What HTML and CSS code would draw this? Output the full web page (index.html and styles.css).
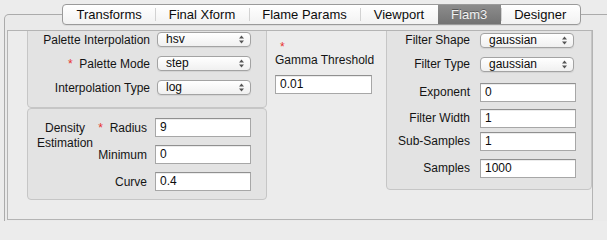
FILE: index.html
```html
<!DOCTYPE html>
<html>
<head>
<meta charset="utf-8">
<link rel="stylesheet" href="styles.css">
</head>
<body>
<div class="page">
  <div class="tabs">
    <div class="tab">Transforms</div>
    <div class="tab">Final Xform</div>
    <div class="tab">Flame Params</div>
    <div class="tab">Viewport</div>
    <div class="tab active">Flam3</div>
    <div class="tab">Designer</div>
  </div>
  <div class="frame">
    <div class="scroll">
      <div class="content">
        <div class="col-left">
          <div class="box palette">
            <div class="lbl">Palette Interpolation</div>
            <div class="combo"><span>hsv</span><svg class="arrows" width="5" height="9" viewBox="0 0 5 9"><path d="M0 3.5L2.5 0.5L5 3.5Z M0 5.5L2.5 8.5L5 5.5Z"/></svg></div>
            <div class="lbl"><span class="req">*</span>&nbsp; Palette Mode</div>
            <div class="combo"><span>step</span><svg class="arrows" width="5" height="9" viewBox="0 0 5 9"><path d="M0 3.5L2.5 0.5L5 3.5Z M0 5.5L2.5 8.5L5 5.5Z"/></svg></div>
            <div class="lbl">Interpolation Type</div>
            <div class="combo"><span>log</span><svg class="arrows" width="5" height="9" viewBox="0 0 5 9"><path d="M0 3.5L2.5 0.5L5 3.5Z M0 5.5L2.5 8.5L5 5.5Z"/></svg></div>
          </div>
          <div class="box density">
            <div class="group-title">Density<br>Estimation</div>
            <div class="lbl"><span class="req">*</span>&nbsp; Radius</div>
            <div class="field">9</div>
            <div class="lbl">Minimum</div>
            <div class="field">0</div>
            <div class="lbl">Curve</div>
            <div class="field">0.4</div>
          </div>
        </div>
        <div class="col-mid">
          <div class="req star">*</div>
          <div class="mid-lbl">Gamma Threshold</div>
          <div class="field mid-field">0.01</div>
        </div>
        <div class="box filter">
          <div class="lbl sm">Filter Shape</div>
          <div class="combo"><span>gaussian</span><svg class="arrows" width="5" height="9" viewBox="0 0 5 9"><path d="M0 3.5L2.5 0.5L5 3.5Z M0 5.5L2.5 8.5L5 5.5Z"/></svg></div>
          <div class="lbl sm">Filter Type</div>
          <div class="combo"><span>gaussian</span><svg class="arrows" width="5" height="9" viewBox="0 0 5 9"><path d="M0 3.5L2.5 0.5L5 3.5Z M0 5.5L2.5 8.5L5 5.5Z"/></svg></div>
          <div class="lbl">Exponent</div>
          <div class="field">0</div>
          <div class="lbl">Filter Width</div>
          <div class="field">1</div>
          <div class="lbl">Sub-Samples</div>
          <div class="field">1</div>
          <div class="lbl">Samples</div>
          <div class="field">1000</div>
        </div>
      </div>
    </div>
  </div>
</div>
</body>
</html>
```

FILE: styles.css
```css
* { box-sizing: border-box; }
html, body { margin: 0; padding: 0; overflow: hidden; }
body {
  background: #ececec;
  font-family: "Liberation Sans", Arial, sans-serif;
  font-size: 12px;
  color: #141414;
}
.page {
  width: 607px;
  height: 221px;
  overflow: hidden;
  display: flex;
  flex-direction: column;
  align-items: flex-start;
  padding-top: 4px;
}
.tabs {
  flex: none;
  display: flex;
  margin-left: 62px;
  height: 21px;
  border: 1px solid #9a9a9a;
  border-radius: 4px;
  background: linear-gradient(#ffffff, #f2f2f2);
  position: relative;
  z-index: 1;
  overflow: hidden;
  box-shadow: 0 1px 0 rgba(0,0,0,0.06);
}
.tab {
  padding: 0 13.5px;
  line-height: 19px;
  font-size: 13px;
  color: #0c0c0c;
}
.tab + .tab {
  background: linear-gradient(#d2d2d2, #d2d2d2) left center / 1px 13px no-repeat;
}
.tab.active, .tab + .tab.active {
  background: linear-gradient(#8c8c8c, #737373);
  color: #f2f2f2;
  text-shadow: 0 -1px 0 rgba(0,0,0,0.35);
}
.frame {
  flex: none;
  margin-top: -11px;
  margin-left: 4px;
  width: 700px;
  height: 207px;
  border: 1px solid #ababab;
  border-bottom: 0;
  border-radius: 5px 5px 0 0;
  padding: 15px 0 0 2px;
  background: #eaeaea;
}
.scroll {
  width: 586px;
  height: 190px;
  border: 1px solid #b4b4b4;
  overflow: hidden;
  background: #ececec;
}
.content {
  display: flex;
  align-items: flex-start;
  margin-top: -10px;
  padding-left: 19px;
}
.box {
  background: #e3e3e3;
  border: 1px solid #c6c6c6;
  border-radius: 4px;
}
.col-left { width: 240px; display: flex; flex-direction: column; }
.lbl { text-align: right; white-space: nowrap; }
.req { color: #e8322e; }
.palette {
  height: 87px;
  padding-top: 10px;
  display: grid;
  grid-template-columns: 122px 94px;
  column-gap: 7px;
  row-gap: 9px;
  grid-auto-rows: 15px;
  align-items: center;
  align-content: start;
}
.combo {
  width: 94px;
  height: 15px;
  border: 1px solid #a3a3a3;
  border-radius: 4px;
  background: linear-gradient(#ffffff, #f0f0f0);
  box-shadow: 0 1px 1px rgba(0,0,0,0.07);
  display: flex;
  align-items: center;
  justify-content: space-between;
  padding: 0 6px 0 8px;
  line-height: 13px;
  color: #0c0c0c;
}
.arrows { fill: #555; }
.field {
  width: 96px;
  height: 19px;
  border: 1px solid #a7a7a7;
  border-top-color: #909090;
  background: #fff;
  box-shadow: inset 0 1px 0 #ececec;
  padding: 0 4px;
  line-height: 17px;
  color: #0c0c0c;
}
.density {
  height: 92px;
  padding: 9px 0 0 9px;
  display: grid;
  grid-template-columns: 56px 62px 96px;
  grid-template-rows: 19px 19px 19px;
  row-gap: 8px;
  align-items: center;
}
.density .lbl { grid-column: 2; padding-right: 8px; }
.density .field { grid-column: 3; }
.group-title {
  grid-column: 1;
  grid-row: 1 / span 2;
  align-self: start;
  margin-top: 3px;
  text-align: center;
  line-height: 15px;
}
.col-mid {
  width: 119px;
  padding: 20px 0 0 8px;
  display: flex;
  flex-direction: column;
  align-items: flex-start;
}
.star { line-height: 12px; padding-left: 5px; }
.mid-lbl { line-height: 15px; white-space: nowrap; }
.mid-field { width: 97px; margin-top: 7px; }
.filter {
  width: 206px;
  height: 169px;
  padding-top: 11px;
  display: grid;
  grid-template-columns: 83px 96px;
  column-gap: 10px;
  grid-template-rows: 24px 26px 26px 23px 27px 19px;
  align-items: start;
}
.filter .lbl { line-height: 19px; }
.filter .lbl.sm { line-height: 15px; }
```
